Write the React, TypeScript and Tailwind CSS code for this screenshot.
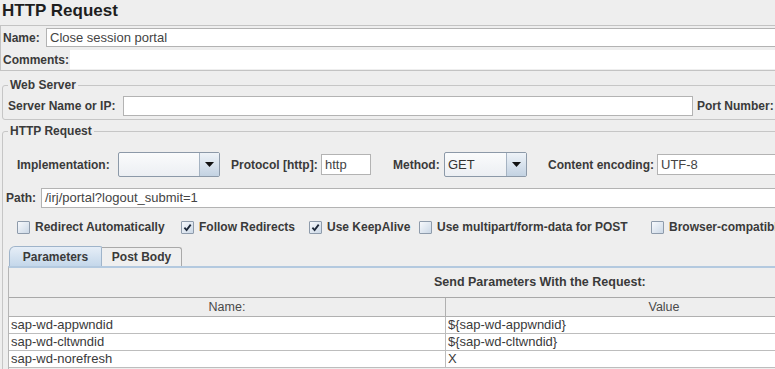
import React from "react";

function Label({ children, className = "" }: { children: React.ReactNode; className?: string }) {
  return (
    <span className={"font-bold text-[12px] leading-[14px] text-[#3a3a3a] whitespace-nowrap shrink-0 " + className}>
      {children}
    </span>
  );
}

function CheckBox({ checked }: { checked?: boolean }) {
  return (
    <span className="w-[13px] h-[13px] shrink-0 border border-[#8e9bab] rounded-[1px] bg-linear-to-br from-[#f7f9fc] to-[#cbd8e6] flex items-center justify-center">
      {checked && (
        <svg width="9" height="9" viewBox="0 0 9 9">
          <path d="M1.4 4.6 L3.6 7 L7.7 1.6" fill="none" stroke="#1c2738" strokeWidth="1.8" />
        </svg>
      )}
    </span>
  );
}

function Arrow() {
  return (
    <svg width="9" height="5" viewBox="0 0 9 5">
      <path d="M0 0 H9 L4.5 5 Z" fill="#111" />
    </svg>
  );
}

function Combo({ value, className }: { value?: string; className: string }) {
  return (
    <div className={"flex h-[25px] shrink-0 border border-[#8c99a8] rounded-[2px] bg-linear-to-b from-[#fafbfc] to-[#eceff3] " + className}>
      <div className="flex-1 flex items-center px-[3px] text-[13px] text-[#333]">{value}</div>
      <div className="w-[20px] border-l border-[#a5b3c2] bg-linear-to-b from-[#eef3f8] to-[#c3d2e2] flex items-center justify-center">
        <Arrow />
      </div>
    </div>
  );
}

function Field({ value, className }: { value?: string; className: string }) {
  return (
    <div className={"bg-white border border-[#b3b3b3] flex items-center px-[3px] text-[13px] text-[#444] whitespace-nowrap " + className}>
      {value}
    </div>
  );
}

function Check({ label, checked, className }: { label: string; checked?: boolean; className: string }) {
  return (
    <div className={"flex items-center gap-[5px] shrink-0 " + className}>
      <CheckBox checked={checked} />
      <Label>{label}</Label>
    </div>
  );
}

const rows = [
  ["sap-wd-appwndid", "${sap-wd-appwndid}"],
  ["sap-wd-cltwndid", "${sap-wd-cltwndid}"],
  ["sap-wd-norefresh", "X"],
];

export default function App() {
  return (
    <div className="w-[775px] h-[369px] overflow-hidden bg-[#eeeeee] font-['Liberation_Sans',Arial,sans-serif] text-[#333]">
      <div className="w-[900px] flex flex-col">
        <div className="h-[25px] pl-[2px] text-[17px] leading-[22px] font-bold text-[#1e1e1e]">HTTP Request</div>

        <div className="border border-[#c3c3c3] pt-[2px] pb-[1px] flex flex-col gap-[3px]">
          <div className="flex items-center h-[19px]">
            <Label className="pl-[2px] w-[45px]">Name:</Label>
            <Field value="Close session portal" className="flex-1 h-[19px]" />
          </div>
          <div className="flex items-center h-[19px]">
            <Label className="pl-[2px] w-[69px]">Comments:</Label>
            <div className="flex-1 h-[19px] bg-white" />
          </div>
        </div>

        <fieldset className="mt-[7px] mx-[2px] border border-[#c6c6c6] rounded-[3px] pb-[3px]">
          <legend className="ml-[5px] px-[2px] font-bold text-[12px] leading-[14px] text-[#3a3a3a]">Web Server</legend>
          <div className="mt-[4px] flex items-center h-[20px] pl-[5px]">
            <Label className="w-[115px]">Server Name or IP:</Label>
            <Field className="w-[570px] h-[20px]" />
            <Label className="ml-[4px]">Port Number:</Label>
            <Field className="ml-[4px] w-[60px] h-[20px]" />
          </div>
        </fieldset>

        <fieldset className="mt-[4px] mx-[2px] border border-[#c6c6c6] rounded-[3px]">
          <legend className="ml-[5px] px-[2px] font-bold text-[12px] leading-[14px] text-[#3a3a3a]">HTTP Request</legend>

          <div className="mt-[14px] flex items-center h-[25px] pl-[14px]">
            <Label className="w-[101px]">Implementation:</Label>
            <Combo className="w-[102px]" />
            <Label className="ml-[11px] w-[90px]">Protocol [http]:</Label>
            <Field value="http" className="w-[50px] h-[21px]" />
            <Label className="ml-[22px] w-[51px]">Method:</Label>
            <Combo value="GET" className="w-[83px]" />
            <Label className="ml-[21px] w-[109px]">Content encoding:</Label>
            <Field value="UTF-8" className="w-[200px] h-[21px]" />
          </div>

          <div className="mt-[11px] flex items-center h-[20px] pl-[3px]">
            <Label className="w-[35px]">Path:</Label>
            <Field value="/irj/portal?logout_submit=1" className="flex-1 h-[20px]" />
          </div>

          <div className="mt-[10px] flex items-center h-[18px] pl-[14px]">
            <Check label="Redirect Automatically" className="w-[164px]" />
            <Check label="Follow Redirects" checked className="w-[128px]" />
            <Check label="Use KeepAlive" checked className="w-[110px]" />
            <Check label="Use multipart/form-data for POST" className="w-[232px]" />
            <Check label="Browser-compatible headers" className="w-[220px]" />
          </div>

          <div className="mt-[10px] ml-[6px] flex items-end h-[20px]">
            <div className="w-[93px] h-[20px] border border-b-0 border-[#9fb4ca] rounded-tl-[6px] rounded-tr-[2px] bg-linear-to-b from-[#e6eef7] to-[#c4d7ea] flex items-center justify-center">
              <Label>Parameters</Label>
            </div>
            <div className="w-[80px] h-[19px] border border-b-0 border-l-0 border-[#a9a9a9] rounded-tr-[3px] bg-[#efefef] flex items-center justify-center">
              <Label>Post Body</Label>
            </div>
          </div>

          <div className="ml-[5px] border-t-2 border-l border-t-[#b3c9df] border-l-[#b5b5b5] flex flex-col h-[120px]">
            <div className="h-[29px] flex items-center pl-[425px]">
              <span className="font-bold text-[12.5px] text-[#3a3a3a] whitespace-nowrap">Send Parameters With the Request:</span>
            </div>
            <div className="grid grid-cols-[437px_436px] border-t border-[#a8a8a8] text-[13px] leading-[16px]">
              <div className="h-[19px] border-r border-b border-[#b0b0b0] flex items-center justify-center text-[12.5px] text-[#4a4a4a]">Name:</div>
              <div className="h-[19px] border-b border-[#b0b0b0] flex items-center justify-center text-[12.5px] text-[#4a4a4a]">Value</div>
              {rows.map(([n, v]) => (
                <React.Fragment key={n}>
                  <div className="h-[17px] bg-white border-r border-b border-[#bdbdbd] pl-[2px] text-[#3a3a3a] whitespace-nowrap">{n}</div>
                  <div className="h-[17px] bg-white border-b border-[#bdbdbd] pl-[2px] text-[#3a3a3a] whitespace-nowrap">{v}</div>
                </React.Fragment>
              ))}
            </div>
          </div>
        </fieldset>
      </div>
    </div>
  );
}
